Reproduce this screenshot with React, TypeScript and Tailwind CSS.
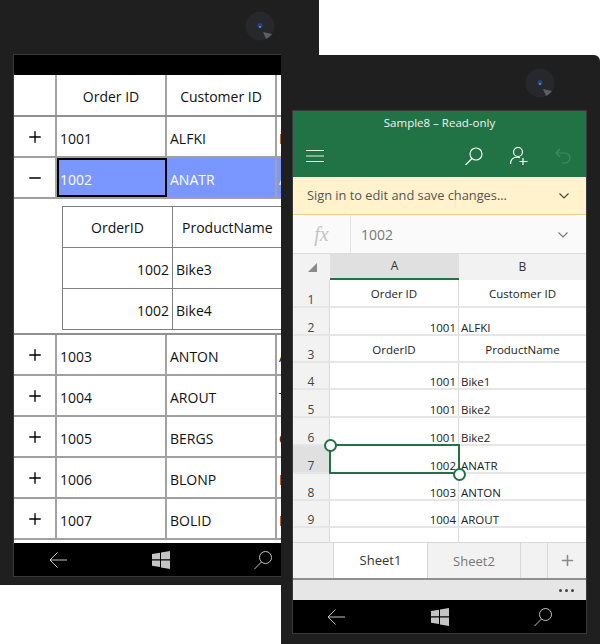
import { Plus, Minus } from "lucide-react";

const ORDERS_TOP = [
  { id: "1001", customer: "ALFKI", contact: "M" },
  { id: "1002", customer: "ANATR", contact: "A", open: true },
];
const ORDERS_BOTTOM = [
  { id: "1003", customer: "ANTON", contact: "A" },
  { id: "1004", customer: "AROUT", contact: "T" },
  { id: "1005", customer: "BERGS", contact: "C" },
  { id: "1006", customer: "BLONP", contact: "F" },
  { id: "1007", customer: "BOLID", contact: "M" },
];

const SHEET_ROWS = [
  { n: "1", h: "h-[28px]", a: "Order ID", b: "Customer ID", head: true },
  { n: "2", h: "h-[28px]", a: "1001", b: "ALFKI" },
  { n: "3", h: "h-[27px]", a: "OrderID", b: "ProductName", head: true },
  { n: "4", h: "h-[27px]", a: "1001", b: "Bike1" },
  { n: "5", h: "h-[28px]", a: "1001", b: "Bike2" },
  { n: "6", h: "h-[28px]", a: "1001", b: "Bike2" },
  { n: "7", h: "h-[28px]", a: "1002", b: "ANATR", active: true },
  { n: "8", h: "h-[27px]", a: "1003", b: "ANTON" },
  { n: "9", h: "h-[27px]", a: "1004", b: "AROUT" },
];

function Camera() {
  return (
    <svg width="30" height="30" viewBox="0 0 30 30" className="absolute">
      <circle cx="15" cy="15" r="14.500" fill="#26282c" />
      <path d="M18 21 L27 23 A14.500 14.500 0 0 1 21 28 Z" fill="#5e5e5e" />
      <circle cx="15" cy="14.500" r="2.500" fill="#2b3f86" />
      <circle cx="15" cy="16" r="1" fill="#35b5a5" />
    </svg>
  );
}

function NavBar({ gap }: { gap: string }) {
  return (
    <div className={`flex h-[33px] shrink-0 items-center bg-black ${gap}`}>
      <svg width="18" height="16" viewBox="0 0 18 16" fill="none" stroke="#c4c4c4" strokeWidth="1">
        <path d="M18 8H1M8.500 .5 1 8l7.500 7.500" />
      </svg>
      <svg width="18" height="18" viewBox="0 0 18 18" fill="#c4c4c4">
        <path d="M0 3 8 1.800V8.300H0ZM9 1.600 18 0V8.300H9ZM0 9.500H8V16L0 14.800ZM9 9.500H18V18L9 16.400Z" />
      </svg>
      <svg width="18" height="18" viewBox="0 0 18 18" fill="none" stroke="#c4c4c4" strokeWidth="1">
        <circle cx="11.500" cy="6.500" r="6" />
        <path d="M7.500 11 .5 18" />
      </svg>
    </div>
  );
}

function GridCell({ className = "", children }: { className?: string; children?: React.ReactNode }) {
  return (
    <div className={`flex shrink-0 items-center border-r-2 border-[#a3a3a3] ${className}`}>{children}</div>
  );
}

function OrderRow({ id, customer, contact, open }: { id: string; customer: string; contact: string; open?: boolean }) {
  return (
    <div className="flex h-[41px] shrink-0 border-b-2 border-[#a0a0a0] text-[14px] text-[#111]">
      <GridCell className="w-[43px] justify-center">
        {open ? <Minus size={18} strokeWidth={1.800} color="#000" /> : <Plus size={18} strokeWidth={1.800} color="#000" />}
      </GridCell>
      {open ? (
        <>
          <div className="flex w-[110px] shrink-0 items-center border-2 border-black bg-[#7a96ff] pt-[3px] pl-[1px] text-white">{id}</div>
          <GridCell className="w-[110px] bg-[#7a96ff] pt-[4px] pl-[3px] text-white">{customer}</GridCell>
          <div className="flex flex-1 items-center overflow-hidden bg-[#7a96ff] pt-[4px] pl-[2px] text-white">{contact}</div>
        </>
      ) : (
        <>
          <GridCell className="w-[110px] pt-[4px] pl-[3px]">{id}</GridCell>
          <GridCell className="w-[110px] pt-[4px] pl-[3px]">{customer}</GridCell>
          <div className="flex flex-1 items-center overflow-hidden pt-[4px] pl-[2px]">{contact}</div>
        </>
      )}
    </div>
  );
}

function DetailRow({ id, name }: { id: string; name: string }) {
  return (
    <div className="flex h-[41px] border-b border-[#808080] text-[14px] text-[#111]">
      <div className="flex w-[110px] shrink-0 items-center justify-end border-r border-[#808080] pt-[2px] pr-[3px]">{id}</div>
      <div className="flex items-center pt-[2px] pl-[3px]">{name}</div>
    </div>
  );
}

function LeftPhone() {
  return (
    <div className="absolute top-0 left-0 flex h-[585px] w-[293px] flex-col overflow-hidden bg-[#1f1f1f] pt-[54px] pb-[8px] pl-[13px]">
      <div className="absolute top-[11px] left-[245px]">
        <Camera />
      </div>
      <div className="flex w-[268px] flex-1 flex-col border-y border-l border-[#3a3a3a] bg-white">
        <div className="h-[20px] shrink-0 bg-black" />
        <div className="flex h-[42px] shrink-0 border-b-2 border-[#909090] text-[14px] font-medium text-[#111]">
          <GridCell className="w-[43px]" />
          <GridCell className="w-[110px] justify-center pt-[2px]">Order ID</GridCell>
          <GridCell className="w-[110px] justify-center pt-[2px]">Customer ID</GridCell>
          <div className="flex-1" />
        </div>
        {ORDERS_TOP.map((o) => (
          <OrderRow key={o.id} {...o} />
        ))}
        <div className="flex h-[136px] shrink-0 flex-col border-b-2 border-[#909090] pt-[7px] pl-[48px]">
          <div className="flex h-[124px] flex-col border-t border-l border-[#808080]">
            <div className="flex h-[41px] shrink-0 border-b border-[#808080] text-[14px] font-medium text-[#111]">
              <div className="flex w-[110px] shrink-0 items-center justify-center border-r border-[#808080]">OrderID</div>
              <div className="flex items-center pl-[9px]">ProductName</div>
            </div>
            <DetailRow id="1002" name="Bike3" />
            <DetailRow id="1002" name="Bike4" />
          </div>
        </div>
        {ORDERS_BOTTOM.map((o) => (
          <OrderRow key={o.id} {...o} />
        ))}
        <div className="flex-1" />
        <NavBar gap="justify-between pr-[9px] pl-[35px]" />
      </div>
    </div>
  );
}

function SheetRow({ n, h, a, b, head, active }: { n: string; h: string; a: string; b: string; head?: boolean; active?: boolean }) {
  return (
    <div className={`flex shrink-0 border-b-2 border-[#e6e6e6] text-[11.5px] leading-[12px] text-[#222] ${h}`}>
      <div
        className={`flex w-[37px] shrink-0 items-end justify-center border-r border-[#d8d8d8] text-[12px] text-[#444] ${active ? "bg-[#e0e0e0]" : "bg-[#f2f2f2]"}`}
      >
        {n}
      </div>
      {head ? (
        <>
          <div className="flex w-[129px] shrink-0 justify-center border-r border-[#dcdcdc] pt-[8px]">{a}</div>
          <div className="flex flex-1 justify-center pt-[8px]">{b}</div>
        </>
      ) : (
        <>
          <div className="flex w-[129px] shrink-0 items-end justify-end border-r border-[#dcdcdc] pr-[2px]">{a}</div>
          <div className="flex flex-1 items-end pl-[2px]">{b}</div>
        </>
      )}
    </div>
  );
}

function RightPhone() {
  return (
    <div className="absolute top-[55px] left-[281px] flex h-[589px] w-[319px] flex-col rounded-tr-[6px] bg-[#1f1f1f] pt-[55px] pr-[13px] pb-[10px] pl-[11px]">
      <div className="absolute top-[13px] left-[244px]">
        <Camera />
      </div>
      <div className="flex flex-1 flex-col border border-[#3a3a3a] bg-white">
        {/* title and command bar */}
        <div className="flex h-[66px] shrink-0 flex-col bg-[#217346] text-white">
          <div className="pt-[3px] text-center text-[11.5px] leading-[18px] text-[#eef5f0]">Sample8 – Read-only</div>
          <div className="flex flex-1 items-center pt-[3px] pr-[15px] pl-[13px]">
            <svg width="18" height="12" viewBox="0 0 18 12" stroke="#e4efe8" strokeWidth="1">
              <path d="M0 .5H18M0 6H18M0 11.500H18" />
            </svg>
            <svg width="18" height="18" viewBox="0 0 18 18" fill="none" stroke="#fff" strokeWidth="1.100" className="ml-[141px]">
              <circle cx="11" cy="7" r="6" />
              <path d="M7 11.500 .5 18" />
            </svg>
            <svg width="18" height="18" viewBox="0 0 18 18" fill="none" stroke="#fff" strokeWidth="1.200" className="ml-[27px]">
              <circle cx="8" cy="5" r="4.500" />
              <path d="M.5 17c0-4 2.500-6.500 6-7 1.500 0 2.500.2 3.500.8M13 11v7M9.500 14.500h8" />
            </svg>
            <svg width="16" height="16" viewBox="0 0 16 16" fill="none" stroke="#3f8c62" strokeWidth="1.200" className="ml-[27px]">
              <path d="M5 1 1 5l4 4M1 5h9a5 5 0 0 1 0 10H7" />
            </svg>
          </div>
        </div>
        {/* sign in banner */}
        <div className="flex h-[38px] shrink-0 items-center justify-between border-b border-[#eecb8e] bg-[#fff2cc] pr-[17px] pl-[14px] text-[12.8px] text-[#555]">
          <span>Sign in to edit and save changes...</span>
          <svg width="10" height="6" viewBox="0 0 10 6" fill="none" stroke="#444" strokeWidth="1.100">
            <path d="M.5.5 5 5 9.500.5" />
          </svg>
        </div>
        {/* formula bar */}
        <div className="flex h-[39px] shrink-0 border-b border-[#dcdcdc] bg-[#fafafa]">
          <div className="flex w-[58px] shrink-0 items-center justify-center border-r border-[#e4e4e4] font-['Liberation_Serif',serif] text-[20px] text-[#c4c4c4] italic">
            fx
          </div>
          <div className="flex flex-1 items-center justify-between pt-[1px] pr-[18px] pl-[10px] text-[14px] text-[#777]">
            <span>1002</span>
            <svg width="10" height="6" viewBox="0 0 10 6" fill="none" stroke="#777" strokeWidth="1.100">
              <path d="M.5.5 5 5 9.500.5" />
            </svg>
          </div>
        </div>
        {/* column headers */}
        <div className="flex h-[26px] shrink-0 bg-[#f2f2f2] text-[12px] text-[#333]">
          <div className="flex w-[37px] shrink-0 items-center justify-center pl-[1px]">
            <svg width="9" height="9" viewBox="0 0 9 9" fill="#8a8a8a">
              <path d="M9 0V9H0Z" />
            </svg>
          </div>
          <div className="flex w-[129px] shrink-0 items-center justify-center border-b-2 border-[#217346] bg-[#e0e0e0]">A</div>
          <div className="flex flex-1 items-center justify-center">B</div>
        </div>
        {/* sheet */}
        <div className="relative flex flex-1 flex-col">
          {SHEET_ROWS.map((r) => (
            <SheetRow key={r.n} {...r} />
          ))}
          <div className="flex flex-1">
            <div className="w-[37px] border-r border-[#d8d8d8] bg-[#f2f2f2]" />
            <div className="w-[129px] border-r border-[#dcdcdc]" />
          </div>
          <div className="absolute top-[164px] left-[36px] h-[30px] w-[131px] border-2 border-[#217346]" />
          <div className="absolute top-[159px] left-[31px] h-[13px] w-[13px] rounded-full border-2 border-[#217346] bg-white" />
          <div className="absolute top-[188px] left-[160px] h-[13px] w-[13px] rounded-full border-2 border-[#217346] bg-white" />
        </div>
        {/* sheet tabs */}
        <div className="flex h-[38px] shrink-0 border-t border-b-2 border-t-[#d8d8d8] border-b-[#8f8f8f] bg-[#f2f2f2] text-[13px]">
          <div className="w-[41px] border-r border-[#d8d8d8]" />
          <div className="flex w-[93px] items-center justify-center bg-white font-medium text-[#333]">Sheet1</div>
          <div className="flex w-[94px] items-center justify-center border-x border-[#d8d8d8] pt-[2px] text-[#777]">Sheet2</div>
          <div className="w-[27px] border-r border-[#d8d8d8]" />
          <div className="flex flex-1 items-center justify-center">
            <Plus size={17} strokeWidth={2.200} color="#8a8a8a" />
          </div>
        </div>
        {/* overflow strip */}
        <div className="flex h-[20px] shrink-0 items-center justify-end gap-[3px] bg-[#e6e6e6] pr-[12px]">
          <span className="h-[3px] w-[3px] rounded-full bg-[#444]" />
          <span className="h-[3px] w-[3px] rounded-full bg-[#444]" />
          <span className="h-[3px] w-[3px] rounded-full bg-[#444]" />
        </div>
        <NavBar gap="justify-between pr-[34px] pl-[34px]" />
      </div>
    </div>
  );
}

export default function App() {
  return (
    <div className="relative h-[644px] w-[600px] overflow-hidden bg-white font-['Open_Sans',sans-serif]">
      {/* top right of the back phone stays visible above the front one */}
      <div className="absolute top-0 left-[293px] h-[55px] w-[26px] bg-[#1f1f1f]" />
      <LeftPhone />
      <RightPhone />
    </div>
  );
}
